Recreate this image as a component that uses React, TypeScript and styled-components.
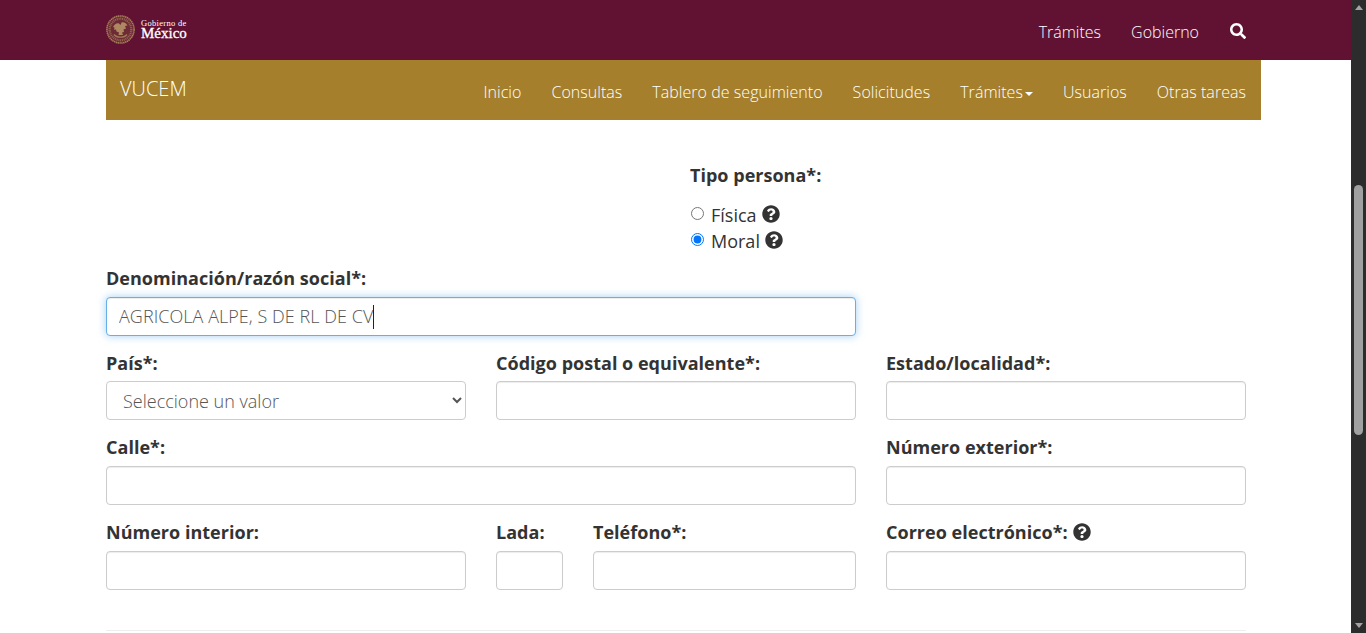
import React from 'react'
import styled, { createGlobalStyle } from 'styled-components'
import { FaQuestionCircle, FaSearch } from 'react-icons/fa'

const GlobalStyle = createGlobalStyle`
    *{
        box-sizing: border-box;
    }
    html, body{
        margin: 0px;
        padding: 0px;
        height: 633px;
        overflow: hidden;
        background-color: white;
        font-family: "Open Sans", "Liberation Sans", sans-serif;
        color: #333;
    }
`

const Page = styled.div`
    display: flex;
    width: 1366px;
    height: 633px;
`

const Main = styled.div`
    width: 1351px;
    height: 633px;
    overflow: hidden;
`

const TopBar = styled.header`
    height: 60px;
    background-color: #611232;
    padding: 0px 105px 0px 106px;
    display: flex;
    align-items: center;
    justify-content: space-between;
`

const Logo = styled.div`
    display: flex;
    align-items: center;
    gap: 6px;
    margin-top: -1px;
`

const LogoText = styled.div`
    display: flex;
    flex-direction: column;
    color: white;
    font-family: "Liberation Serif", serif;
    .small{
        font-size: 8.5px;
        line-height: 8px;
        letter-spacing: 0.3px;
    }
    .big{
        font-size: 15px;
        line-height: 13px;
        -webkit-text-stroke: 0.3px white;
    }
`

const TopLinks = styled.nav`
    display: flex;
    align-items: center;
    gap: 30px;
    color: white;
    font-size: 16px;
    font-weight: 300;
    margin-top: 3px;
    svg{
        display: block;
        margin: -2px 0px 0px 1px;
    }
`

const GoldBar = styled.nav`
    width: 1155px;
    height: 60px;
    margin-left: 106px;
    background-color: #a57f2c;
    color: white;
    display: flex;
    justify-content: space-between;
    padding: 0px 15px 0px 14px;
`

const Brand = styled.div`
    font-size: 20px;
    font-weight: 300;
    line-height: 57px;
`

const GoldLinks = styled.div`
    display: flex;
    gap: 30px;
    font-size: 16px;
    font-weight: 300;
    letter-spacing: 0.04px;
    line-height: 64px;
`

const Caret = styled.span`
    display: inline-block;
    width: 0px;
    height: 0px;
    margin-left: 2px;
    vertical-align: middle;
    border-top: 4px solid white;
    border-left: 4px solid transparent;
    border-right: 4px solid transparent;
`

const Form = styled.form`
    width: 1140px;
    margin-left: 106px;
    padding-top: 44px;
`

const PersonBlock = styled.div`
    margin-left: 584px;
    height: 104px;
`

const Label = styled.label<{ $low?: boolean }>`
    display: block;
    margin-top: -1px;
    font-size: 18px;
    font-weight: 700;
    letter-spacing: 0.02px;
    line-height: 24px;
    height: 24px;
    white-space: nowrap;
    ${(p) => p.$low && 'transform: translateY(1px);'}
    svg{
        font-size: 18px;
        vertical-align: -2px;
        margin-left: 5px;
        color: #333;
    }
`

const RadioRow = styled.div`
    display: flex;
    align-items: center;
    height: 26px;
    font-size: 18px;
    input{
        margin: 0px 7px 4px 1px;
        width: 13px;
        height: 13px;
    }
    svg{
        font-size: 18px;
        margin-left: 5px;
        margin-bottom: 2px;
        color: #333;
    }
`

const RadioGroup = styled.div`
    margin-top: 15px;
`

const Row = styled.div<{ $cols: string; $height?: number }>`
    display: grid;
    grid-template-columns: ${(p) => p.$cols};
    column-gap: 30px;
    height: ${(p) => p.$height ?? 85}px;
`

const Field = styled.div`
    position: relative;
`

const Input = styled.input<{ $focus?: boolean }>`
    display: block;
    width: 100%;
    height: 39px;
    margin-top: 7px;
    padding: 5px 12px 7px 12px;
    font-family: inherit;
    font-size: 18px;
    font-weight: 300;
    letter-spacing: 0.05px;
    color: #555;
    background-color: white;
    border-radius: 4px;
    outline: none;
    border: 1px solid ${(p) => (p.$focus ? '#66afe9' : '#ccc')};
    box-shadow: ${(p) =>
        p.$focus
            ? 'inset 0 1px 1px rgba(0,0,0,.075), 0 0 8px rgba(102,175,233,.6)'
            : 'inset 0 1px 1px rgba(0,0,0,.075)'};
`

const TextCaret = styled.span`
    position: absolute;
    left: 267px;
    top: 38px;
    width: 1px;
    height: 24px;
    background-color: #222;
`

const Select = styled.select`
    display: block;
    width: 100%;
    height: 39px;
    margin-top: 7px;
    padding: 6px 12px;
    font-family: inherit;
    font-size: 18px;
    font-weight: 300;
    color: #555;
    background-color: white;
    border: 1px solid #ccc;
    border-radius: 4px;
    outline: none;
`

const Divider = styled.hr`
    width: 1140px;
    margin: 24px 0px 0px 0px;
    border: 0px;
    border-top: 1px solid #eee;
`

const Scrollbar = styled.div`
    width: 15px;
    height: 633px;
    background-color: #2c2c2c;
    display: flex;
    flex-direction: column;
    align-items: center;
`

const Arrow = styled.span<{ $down?: boolean }>`
    width: 0px;
    height: 0px;
    margin: 5px 0px;
    border-left: 4.500px solid transparent;
    border-right: 4.500px solid transparent;
    ${(p) => (p.$down ? 'border-top: 5px solid #a3a3a3; margin-top: auto;' : 'border-bottom: 5px solid #a3a3a3;')}
`

const Thumb = styled.div`
    width: 9px;
    height: 250px;
    margin-top: 170px;
    background-color: #a0a0a0;
    border-radius: 5px;
`

const Seal: React.FC = () => (
    <svg width="29" height="29" viewBox="0 0 29 29" aria-hidden="true">
        <circle cx="14.5" cy="14.5" r="13.6" fill="#6e2a36" stroke="#a9835a" strokeWidth="1.500" strokeDasharray="1.400 0.500" />
        <circle cx="14.5" cy="14.5" r="10.8" fill="none" stroke="#94694f" strokeWidth="2.200" strokeDasharray="1 0.800" />
        <path
            d="M7 12c1.500-3 4-4.500 6-3.500l1.500 1.500 1-2.500c2-.8 4.500.3 6 3l-2.500.5 1 2.500-2.500 1 .5 2.500-2 .5 1 2.500h-4.500l.5-2.500-2.500-1-.5-2-2 .2.5-2.200z"
            fill="#ad8860"
        />
        <path d="M8 19.500c2.500 3.500 10.500 3.500 13 0" fill="none" stroke="#a07a55" strokeWidth="1.400" />
    </svg>
)

const App: React.FC = () => {
    return (
        <>
            <GlobalStyle />
            <Page>
                <Main>
                    <TopBar>
                        <Logo>
                            <Seal />
                            <LogoText>
                                <span className="small">Gobierno de</span>
                                <span className="big">México</span>
                            </LogoText>
                        </Logo>
                        <TopLinks>
                            <span>Trámites</span>
                            <span>Gobierno</span>
                            <FaSearch size={16} />
                        </TopLinks>
                    </TopBar>
                    <GoldBar>
                        <Brand>VUCEM</Brand>
                        <GoldLinks>
                            <span>Inicio</span>
                            <span>Consultas</span>
                            <span>Tablero de seguimiento</span>
                            <span>Solicitudes</span>
                            <span>
                                Trámites
                                <Caret />
                            </span>
                            <span>Usuarios</span>
                            <span>Otras tareas</span>
                        </GoldLinks>
                    </GoldBar>
                    <Form>
                        <PersonBlock>
                            <Label>Tipo persona*:</Label>
                            <RadioGroup>
                                <RadioRow>
                                    <input type="radio" name="tipo" readOnly />
                                    Física
                                    <FaQuestionCircle />
                                </RadioRow>
                                <RadioRow>
                                    <input type="radio" name="tipo" defaultChecked />
                                    Moral
                                    <FaQuestionCircle />
                                </RadioRow>
                            </RadioGroup>
                        </PersonBlock>
                        <Row $cols="750px" $height={84}>
                            <Field>
                                <Label>Denominación/razón social*:</Label>
                                <Input $focus defaultValue="AGRICOLA ALPE, S DE RL DE CV" />
                                <TextCaret />
                            </Field>
                        </Row>
                        <Row $cols="360px 360px 360px">
                            <Field>
                                <Label $low>País*:</Label>
                                <Select>
                                    <option>Seleccione un valor</option>
                                </Select>
                            </Field>
                            <Field>
                                <Label $low>Código postal o equivalente*:</Label>
                                <Input />
                            </Field>
                            <Field>
                                <Label $low>Estado/localidad*:</Label>
                                <Input />
                            </Field>
                        </Row>
                        <Row $cols="750px 360px">
                            <Field>
                                <Label>Calle*:</Label>
                                <Input />
                            </Field>
                            <Field>
                                <Label>Número exterior*:</Label>
                                <Input />
                            </Field>
                        </Row>
                        <Row $cols="360px 67px 263px 360px">
                            <Field>
                                <Label>Número interior:</Label>
                                <Input />
                            </Field>
                            <Field>
                                <Label>Lada:</Label>
                                <Input />
                            </Field>
                            <Field>
                                <Label>Teléfono*:</Label>
                                <Input />
                            </Field>
                            <Field>
                                <Label>
                                    Correo electrónico*:
                                    <FaQuestionCircle />
                                </Label>
                                <Input />
                            </Field>
                        </Row>
                        <Divider />
                    </Form>
                </Main>
                <Scrollbar>
                    <Arrow />
                    <Thumb />
                    <Arrow $down />
                </Scrollbar>
            </Page>
        </>
    )
}

export default App
